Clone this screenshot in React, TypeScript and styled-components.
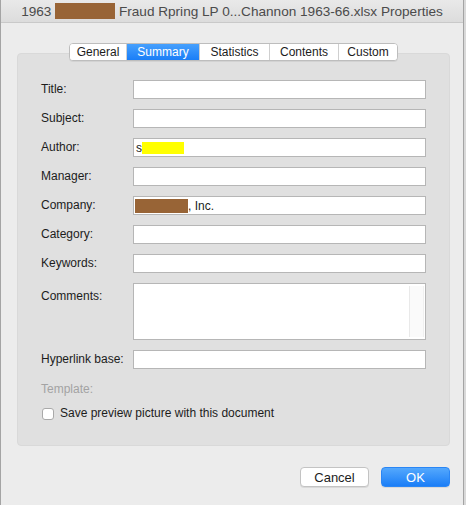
import React from 'react';
import styled, { createGlobalStyle } from 'styled-components';

const GlobalStyle = createGlobalStyle`
  html, body {
    margin: 0;
    padding: 0;
    background: #d9d9d9;
  }
  body {
    font-family: "Liberation Sans", Arial, sans-serif;
    color: #1c1c1c;
  }
`

const Window = styled.div`
  width: 464px;
  height: 505px;
  box-sizing: border-box;
  border-left: 1px solid #a4a4a4;
  border-right: 1px solid #a4a4a4;
  background: #ececec;
  display: flex;
  flex-direction: column;
`

const TitleBar = styled.div`
  height: 22px;
  flex-shrink: 0;
  background: linear-gradient(#e9e9e9, #dcdcdc);
  border-bottom: 1px solid #c9c9c9;
  display: flex;
  align-items: center;
  justify-content: center;
  font-size: 13.6px;
  color: #4b4b4b;
  white-space: pre;
`

const Redact = styled.span<{ $w: number; $h: number; $color: string }>`
  display: inline-block;
  width: ${p => p.$w}px;
  height: ${p => p.$h}px;
  background: ${p => p.$color};
  vertical-align: middle;
`

const Body = styled.div`
  flex: 1;
  padding: 20px 13px 0 16px;
  display: flex;
  flex-direction: column;
`

const TabBar = styled.div`
  display: flex;
  justify-content: center;
  position: relative;
  z-index: 1;
  margin-bottom: -8px;
`

const Segments = styled.div`
  display: flex;
  height: 18px;
  box-sizing: border-box;
  border: 1px solid #bdbdbd;
  border-radius: 4px;
  background: #fff;
  overflow: hidden;
  box-shadow: 0 1px 0 rgba(0, 0, 0, 0.06);
`

const Tab = styled.div<{ $w: number; $active?: boolean }>`
  width: ${p => p.$w}px;
  display: flex;
  align-items: center;
  justify-content: center;
  font-size: 12px;
  color: ${p => (p.$active ? '#fff' : '#1c1c1c')};
  background: ${p => (p.$active ? 'linear-gradient(#46a0fd, #1a7ef7)' : '#fff')};
  & + & {
    border-left: 1px solid #cfcfcf;
  }
`

const Panel = styled.div`
  height: 393px;
  box-sizing: border-box;
  background: #e0e0e0;
  border: 1px solid #d9d9d9;
  border-radius: 4px;
  padding: 26px 23px 0 23px;
  display: flex;
  flex-direction: column;
  align-items: flex-start;
`

const Form = styled.div`
  display: grid;
  grid-template-columns: 92px 293px;
  row-gap: 10px;
`

const Label = styled.div<{ $top?: boolean; $muted?: boolean }>`
  font-size: 12px;
  line-height: 19px;
  align-self: ${p => (p.$top ? 'start' : 'center')};
  padding-top: ${p => (p.$top ? '4px' : '0')};
  color: ${p => (p.$muted ? '#a3a3a3' : '#1c1c1c')};
  white-space: nowrap;
`

const Field = styled.div`
  height: 19px;
  box-sizing: border-box;
  border: 1px solid #b6b6b6;
  background: #fff;
  display: flex;
  align-items: center;
  padding: 0 2px;
  font-size: 12px;
  white-space: pre;
`

const TextArea = styled.div`
  height: 57px;
  box-sizing: border-box;
  border: 1px solid #b6b6b6;
  background: #fff;
  display: flex;
  justify-content: flex-end;
  padding: 2px 1px;
`

const ScrollTrack = styled.div`
  width: 15px;
  background: #fafafa;
  border-left: 1px solid #e9e9e9;
  border-right: 1px solid #f0f0f0;
  box-sizing: border-box;
`

const Template = styled.div`
  margin-top: 11px;
  font-size: 12px;
  line-height: 19px;
  color: #a3a3a3;
`

const CheckRow = styled.label`
  display: flex;
  align-items: center;
  gap: 6px;
  margin-top: 5px;
  padding-left: 1px;
  font-size: 12px;
  line-height: 19px;
`

const Box = styled.span`
  width: 12px;
  height: 12px;
  box-sizing: border-box;
  border: 1px solid #a9a9a9;
  border-radius: 3px;
  background: #fff;
`

const Buttons = styled.div`
  display: flex;
  justify-content: flex-end;
  gap: 12px;
  margin-top: 21px;
`

const Button = styled.button<{ $primary?: boolean }>`
  width: 69px;
  height: 20px;
  box-sizing: border-box;
  border-radius: 4px;
  font-family: "Liberation Sans", Arial, sans-serif;
  font-size: 13px;
  padding: 0;
  border: 1px solid ${p => (p.$primary ? '#2a86f5' : '#c3c3c3')};
  background: ${p => (p.$primary ? 'linear-gradient(#54a8fd, #1b7ef7)' : '#fff')};
  color: ${p => (p.$primary ? '#fff' : '#1c1c1c')};
  box-shadow: 0 1px 0 rgba(0, 0, 0, 0.08);
`

const tabs = [
  { name: 'General', w: 56 },
  { name: 'Summary', w: 72, active: true },
  { name: 'Statistics', w: 69 },
  { name: 'Contents', w: 68 },
  { name: 'Custom', w: 58 },
];

const fields: { label: string; value?: React.ReactNode }[] = [
  { label: 'Title:' },
  { label: 'Subject:' },
  { label: 'Author:', value: <>s<Redact $w={42} $h={12} $color="#ffff00" /></> },
  { label: 'Manager:' },
  { label: 'Company:', value: <><Redact $w={53} $h={14} $color="#986436" style={{ marginLeft: -1 }} />, Inc.</> },
  { label: 'Category:' },
  { label: 'Keywords:' },
];

const App: React.FunctionComponent = () => (
  <>
    <GlobalStyle />
    <Window>
      <TitleBar>
        1963 <Redact $w={60} $h={16} $color="#986436" /> Fraud Rpring LP 0...Channon 1963-66.xlsx Properties
      </TitleBar>
      <Body>
        <TabBar>
          <Segments>
            {tabs.map(t => (
              <Tab key={t.name} $w={t.w} $active={t.active}>{t.name}</Tab>
            ))}
          </Segments>
        </TabBar>
        <Panel>
          <Form>
            {fields.map(f => (
              <React.Fragment key={f.label}>
                <Label>{f.label}</Label>
                <Field>{f.value}</Field>
              </React.Fragment>
            ))}
            <Label $top>Comments:</Label>
            <TextArea><ScrollTrack /></TextArea>
            <Label>Hyperlink base:</Label>
            <Field />
          </Form>
          <Template>Template:</Template>
          <CheckRow>
            <Box />
            Save preview picture with this document
          </CheckRow>
        </Panel>
        <Buttons>
          <Button>Cancel</Button>
          <Button $primary>OK</Button>
        </Buttons>
      </Body>
    </Window>
  </>
);

export default App;
